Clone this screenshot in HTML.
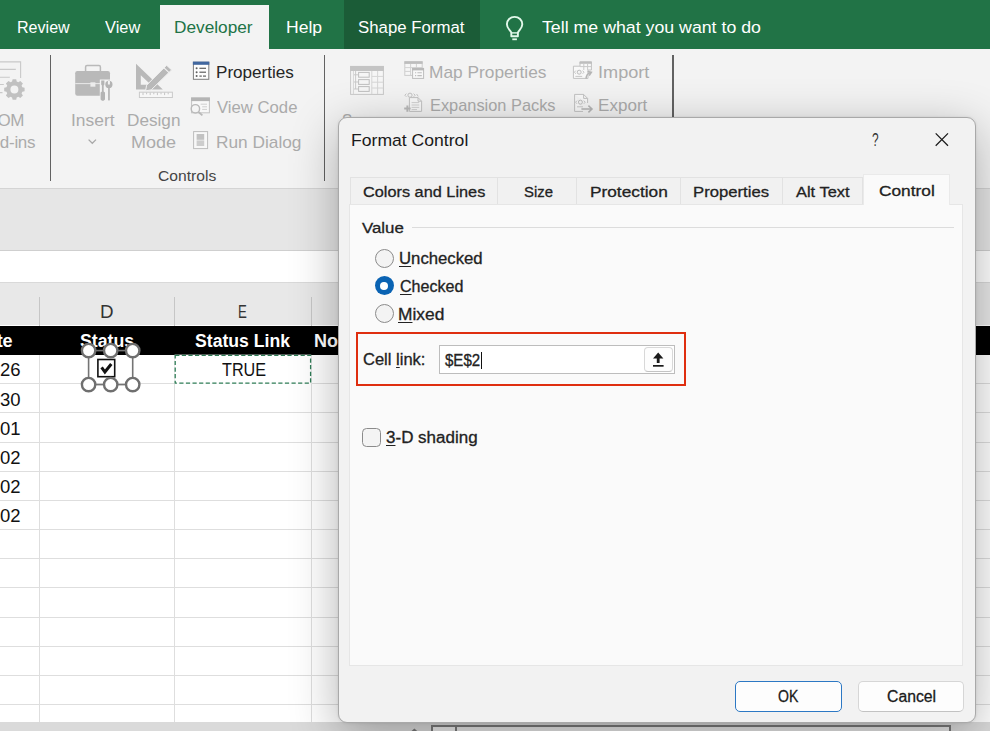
<!DOCTYPE html>
<html lang="en">
<head>
<meta charset="utf-8">
<title>Format Control</title>
<style>
html,body{margin:0;padding:0;}
body{width:990px;height:731px;position:relative;overflow:hidden;background:#fff;font-family:"Liberation Sans",sans-serif;}
.a{position:absolute;}
.t{position:absolute;white-space:pre;line-height:1;font-family:"Liberation Sans",sans-serif;}
.t u{text-decoration:underline;text-underline-offset:2px;text-decoration-thickness:1.3px;}
#bg{position:absolute;left:0;top:0;width:990px;height:731px;overflow:hidden;}
#dlg{position:absolute;left:338.3px;top:117px;width:638px;height:606.3px;box-sizing:border-box;background:#f2f2f2;border:1px solid #a9a9a9;border-radius:9px;box-shadow:0 12px 48px rgba(0,0,0,.30),0 0 3px rgba(0,0,0,.10);}
#dl{position:absolute;left:0;top:0;width:990px;height:731px;}
#dl .t{-webkit-text-stroke:0.3px currentColor;}
.tab{position:absolute;top:177px;height:28px;box-sizing:border-box;background:#f1f1f1;border:1px solid #e2e2e2;border-bottom:none;}
.vs{position:absolute;width:1px;background:#dedede;}
.hs{position:absolute;height:1px;background:#dedede;left:0;width:990px;}
</style>
</head>
<body>
<div id="bg">
  <!-- title / tab strip -->
  <div class="a" style="left:0;top:0;width:990px;height:48.5px;background:#217346;"></div>
  <div class="a" style="left:344px;top:0;width:136px;height:48.5px;background:#1b5c37;"></div>
  <div class="a" style="left:160px;top:5px;width:108.7px;height:44px;background:#f3f3f3;"></div>
  <!-- ribbon body -->
  <div class="a" style="left:0;top:48.5px;width:990px;height:140px;background:#f3f3f3;"></div>
  <div class="a" style="left:0;top:188px;width:990px;height:1px;background:#d4d4d4;"></div>
  <div class="a" style="left:0;top:189px;width:990px;height:61.5px;background:#e6e6e6;"></div>
  <div class="a" style="left:0;top:250px;width:990px;height:1px;background:#cfcfcf;"></div>
  <div class="a" style="left:0;top:251px;width:990px;height:31.3px;background:#ffffff;"></div>
  <div class="a" style="left:0;top:282.3px;width:990px;height:43.2px;background:#e8e8e8;"></div>
  <div class="a" style="left:0;top:281.8px;width:990px;height:1px;background:#d9d9d9;"></div>
  <div class="a" style="left:0;top:325.5px;width:990px;height:29.3px;background:#000;"></div>
  <!-- ribbon separators -->
  <div class="a" style="left:49.6px;top:55px;width:1.5px;height:126px;background:#626262;"></div>
  <div class="a" style="left:323.7px;top:55px;width:1.5px;height:126px;background:#626262;"></div>
  <div class="a" style="left:672.1px;top:55px;width:1.5px;height:126px;background:#626262;"></div>
  <!-- column header separators -->
  <div class="vs" style="left:39px;top:297px;height:28.5px;background:#c6c6c6;"></div>
  <div class="vs" style="left:174px;top:297px;height:28.5px;background:#c6c6c6;"></div>
  <div class="vs" style="left:310.5px;top:297px;height:28.5px;background:#c6c6c6;"></div>
  <!-- sheet gridlines -->
  <div class="vs" style="left:39px;top:354.8px;height:368px;"></div>
  <div class="vs" style="left:174px;top:354.8px;height:368px;"></div>
  <div class="vs" style="left:310.5px;top:354.8px;height:368px;"></div>
  <div class="hs" style="top:383.2px;"></div>
  <div class="hs" style="top:412.4px;"></div>
  <div class="hs" style="top:441.6px;"></div>
  <div class="hs" style="top:470.7px;"></div>
  <div class="hs" style="top:499.9px;"></div>
  <div class="hs" style="top:529.1px;"></div>
  <div class="hs" style="top:558.2px;"></div>
  <div class="hs" style="top:587.4px;"></div>
  <div class="hs" style="top:616.6px;"></div>
  <div class="hs" style="top:645.7px;"></div>
  <div class="hs" style="top:674.9px;"></div>
  <div class="hs" style="top:704.1px;"></div>
  <!-- bottom bar -->
  <div class="a" style="left:0;top:722px;width:990px;height:9px;background:#dadada;"></div>
  <div class="a" style="left:431px;top:724.6px;width:25.6px;height:10px;box-sizing:border-box;border:2px solid #7a7a7a;background:#ececec;"></div>
  <div class="a" style="left:454.6px;top:724.6px;width:496px;height:10px;box-sizing:border-box;border:2px solid #7a7a7a;background:#e6e6e6;"></div>
  <svg class="a" style="left:410px;top:727px;" width="10" height="4" viewBox="0 0 10 4"><path d="M1.6 4 L4.4 1.6 L7.2 4 Z" fill="#777"/></svg>

  <svg class="a" style="left:0;top:0;" width="990" height="731" viewBox="0 0 990 731">
    <!-- lightbulb -->
    <g fill="none" stroke="#e2f8ea" stroke-width="1.9" stroke-linejoin="round">
      <path d="M511.3 36.2 L511.3 32.6 C510.4 30.2 506.9 28.4 506.9 24.3 C506.9 20.1 510.3 16.9 514.6 16.9 C518.9 16.9 522.3 20.1 522.3 24.3 C522.3 28.4 518.8 30.2 517.9 32.6 L517.9 36.2 Z"/>
      <path d="M511.3 32.9 L517.9 32.9" stroke-width="1.4"/>
      <path d="M512.3 39.3 L516.9 39.3" stroke-width="1.8"/>
    </g>
    <!-- COM add-ins icon -->
    <g fill="none" stroke="#c9c9c9" stroke-width="1.1">
      <path d="M0 61.9 L20.6 61.9 L20.6 78"/>
      <path d="M0 69.4 L15.8 69.4 M0 77.2 L9.8 77.2 M0 84.5 L3.8 84.5 M0 92.6 L2.5 92.6"/>
    </g>
    <g fill="#c1c1c1">
      <path fill-rule="evenodd" d="M12.6 79.3 L16.2 79.3 L16.7 81.6 L18.3 82.3 L20.3 81 L22.9 83.6 L21.6 85.6 L22.3 87.2 L24.6 87.7 L24.6 91.3 L22.3 91.8 L21.6 93.4 L22.9 95.4 L20.3 98 L18.3 96.7 L16.7 97.4 L16.2 99.7 L12.6 99.7 L12.1 97.4 L10.5 96.7 L8.5 98 L5.9 95.4 L7.2 93.4 L6.5 91.8 L4.2 91.3 L4.2 87.7 L6.5 87.2 L7.2 85.6 L5.9 83.6 L8.5 81 L10.5 82.3 L12.1 81.6 Z M14.4 85.5 A4 4 0 1 0 14.4 93.5 A4 4 0 1 0 14.4 85.5 Z"/>
    </g>
    <!-- briefcase (Insert) -->
    <path d="M85.6 71 L85.6 67 Q85.6 65.6 87 65.6 L99 65.6 Q100.4 65.6 100.4 67 L100.4 71" fill="none" stroke="#b9b9b9" stroke-width="1.5"/>
    <rect x="75.2" y="71" width="34.8" height="24.8" rx="2.2" fill="#b9b9b9"/>
    <rect x="75.2" y="83" width="34.8" height="1.1" fill="#e4e4e4"/>
    <rect x="90.4" y="82.3" width="5" height="4.4" fill="#ececec"/>
    <rect x="99.8" y="79.5" width="12.8" height="22" fill="#f3f3f3"/>
    <path d="M101.2 80.6 L104.4 80.6 L104.4 84.6 L103.7 85.6 L103.7 91.5 L105 92.4 L105 99.6 L103.6 100.8 L102 100.8 L100.6 99.6 L100.6 92.4 L101.9 91.5 L101.9 85.6 L101.2 84.6 Z" fill="#b4b4b4"/>
    <path d="M108.9 80.8 A3.6 3.6 0 1 0 108.9 88 A3.6 3.6 0 1 0 108.9 80.8 Z M107.9 80.6 L107.9 84.4 L109.9 84.4 L109.9 80.6 Z" fill="#b4b4b4" fill-rule="evenodd"/>
    <rect x="108.1" y="87" width="1.7" height="13.4" fill="#b4b4b4"/>
    <!-- chevron under Insert -->
    <path d="M88.6 139.6 L92.3 143.3 L96 139.6" fill="none" stroke="#a8a8a8" stroke-width="1.3"/>
    <!-- design mode -->
    <path fill-rule="evenodd" d="M136 63.8 L162.8 89.4 L136 89.4 Z M140.8 75.2 L140.8 84.8 L150.9 84.8 Z" fill="#b9b9b9"/>
    <path d="M166.6 65.2 L171.6 69.9 L151.2 89.9 L145.6 90.8 L146.6 85.2 Z" fill="#b9b9b9" stroke="#f3f3f3" stroke-width="1"/>
    <path d="M163.8 67.6 L169 72.6" stroke="#f3f3f3" stroke-width="1.1"/>
    <rect x="139.4" y="92.2" width="33" height="5.3" fill="#f7f7f7" stroke="#cacaca" stroke-width="1"/>
    <path d="M143 92.5v2.6 M146.6 92.5v1.8 M150.2 92.5v2.6 M153.8 92.5v1.8 M157.4 92.5v2.6 M161 92.5v1.8 M164.6 92.5v2.6 M168.2 92.5v1.8" stroke="#c4c4c4" stroke-width="1"/>
    <!-- properties icon -->
    <rect x="193.4" y="62.3" width="15.4" height="17" fill="#fdfdfd" stroke="#7d7d7d" stroke-width="1"/>
    <rect x="192.9" y="61.6" width="16.4" height="3.2" fill="#41679f"/>
    <g fill="#5f5f5f">
      <circle cx="196.6" cy="68.3" r="1"/><circle cx="196.6" cy="72.2" r="1"/><circle cx="196.6" cy="76.1" r="1"/>
      <rect x="199.4" y="67.7" width="6.6" height="1.2"/><rect x="199.4" y="71.6" width="6.6" height="1.2"/><rect x="199.4" y="75.5" width="2.4" height="1.2"/><rect x="203" y="75.5" width="3" height="1.2"/>
    </g>
    <!-- view code icon -->
    <rect x="191.6" y="98" width="17.8" height="14.8" fill="#f8f8f8" stroke="#c4c4c4" stroke-width="1"/>
    <rect x="191.1" y="97.5" width="18.8" height="3.6" fill="#b4b4b4"/>
    <path d="M200.6 104.2h6.4 M202.2 106.8h4.8 M202.2 109.4h4.8" stroke="#cfcfcf" stroke-width="1"/>
    <circle cx="195.4" cy="108.8" r="4.2" fill="#f5f5f5" stroke="#b9b9b9" stroke-width="1.4"/>
    <path d="M198.5 112 L202.4 115.4" stroke="#b9b9b9" stroke-width="1.8"/>
    <!-- run dialog icon -->
    <rect x="193.6" y="131.6" width="14" height="17" fill="#f8f8f8" stroke="#bdbdbd" stroke-width="1"/>
    <rect x="196.6" y="134" width="7.6" height="5.8" fill="#c2c2c2"/>
    <rect x="196.6" y="140.4" width="7.6" height="5.6" fill="#cdcdcd"/>
    <!-- source icon -->
    <rect x="350.6" y="66.4" width="32.8" height="28" fill="#f6f6f6" stroke="#c9c9c9" stroke-width="1"/>
    <rect x="350.2" y="66" width="33.6" height="5" fill="#c4c4c4"/>
    <path d="M353.4 71 V94 M371.8 71 V94 M371.8 76.4 H383 M371.8 82.2 H383 M371.8 88 H383 M377.6 71 V94" stroke="#d6d6d6" stroke-width="1" fill="none"/>
    <path d="M354 74.8 H358.4 M354 82 H358.4 M354 89 H358.4 M355.6 71 V89" stroke="#c9c9c9" stroke-width="1" fill="none"/>
    <rect x="358.6" y="72.4" width="10.6" height="4.8" fill="#f6f6f6" stroke="#bfbfbf" stroke-width="1"/>
    <rect x="358.6" y="79.6" width="10.6" height="4.8" fill="#f6f6f6" stroke="#bfbfbf" stroke-width="1"/>
    <rect x="358.6" y="86.6" width="10.6" height="4.8" fill="#f6f6f6" stroke="#bfbfbf" stroke-width="1"/>
    <!-- map properties icon -->
    <rect x="404.8" y="61.8" width="17.4" height="13.6" fill="#f6f6f6" stroke="#cdcdcd" stroke-width="1"/>
    <rect x="404.4" y="61.3" width="18.2" height="2.6" fill="#bdbdbd"/>
    <path d="M410.6 64 V75 M416.4 64 V68 M405 67.6 H422 M405 71.4 H411" stroke="#d2d2d2" stroke-width="1"/>
    <rect x="412.6" y="68.4" width="11" height="10" fill="#f8f8f8" stroke="#bdbdbd" stroke-width="1"/>
    <rect x="412.2" y="68" width="11.8" height="2.4" fill="#b9b9b9"/>
    <path d="M415 72.8 h1.2 M417.4 72.8 h4.4 M415 75.6 h1.2 M417.4 75.6 h4.4" stroke="#bdbdbd" stroke-width="1.1"/>
    <!-- expansion packs icon -->
    <path d="M409.4 97.6 H418 L421.6 101.2 V111.4 H409.4 Z" fill="#f8f8f8" stroke="#c2c2c2" stroke-width="1"/>
    <path d="M418 97.6 V101.2 H421.6" fill="none" stroke="#c2c2c2" stroke-width="1"/>
    <path d="M411.6 102.6 h7.6 M411.6 105 h7.6 M411.6 107.4 h7.6 M411.6 109.6 h5.4" stroke="#d0d0d0" stroke-width="1"/>
    <circle cx="410" cy="95.2" r="2.1" fill="#f3f3f3" stroke="#c2c2c2" stroke-width="1"/>
    <path d="M406.4 93.6 l-1.6 1.6 l1.6 1.6 M413.6 93.6 l1.6 1.6 l-1.6 1.6 M416.6 94 l1.6 2.4" stroke="#c6c6c6" stroke-width="1" fill="none"/>
    <path d="M404.2 108.6 h6.4 M407.4 105.4 v6.4" stroke="#b9b9b9" stroke-width="2"/>
    <!-- import icon -->
    <path d="M573.4 66.2 H580 V62 H591.4 V70 H588 V78.4 H573.4 Z" fill="#f8f8f8" stroke="#c2c2c2" stroke-width="1"/>
    <rect x="579.6" y="61.4" width="12.2" height="2.4" fill="#bebebe"/>
    <path d="M580 66.6 H591 M583.8 64 V70 M587.6 64 V70" stroke="#c9c9c9" stroke-width="1"/>
    <circle cx="579.2" cy="72.2" r="2" fill="#f3f3f3" stroke="#bdbdbd" stroke-width="1"/>
    <path d="M575.8 70.6 l-1.4 1.6 l1.4 1.6 M582.6 70.6 l1.4 1.6 l-1.4 1.6 M575.4 76.4 h6.8" stroke="#c6c6c6" stroke-width="1" fill="none"/>
    <path d="M586 78.6 Q586.4 73.8 590.2 72.6 M587.6 71.4 L591.4 72.2 L589.2 75.6" stroke="#b4b4b4" stroke-width="1.5" fill="none"/>
    <!-- export icon -->
    <path d="M574.6 94.4 H583.6 L587.6 98.4 V103 M574.6 94.4 V111.4 H583" fill="#f8f8f8" stroke="#c2c2c2" stroke-width="1"/>
    <path d="M583.6 94.4 V98.4 H587.6" fill="none" stroke="#c2c2c2" stroke-width="1"/>
    <circle cx="580.4" cy="102.2" r="2" fill="#f3f3f3" stroke="#bdbdbd" stroke-width="1"/>
    <path d="M577 100.6 l-1.4 1.6 l1.4 1.6 M583.8 100.6 l1.4 1.6 l-1.4 1.6 M577 106.8 h6" stroke="#c6c6c6" stroke-width="1" fill="none"/>
    <path d="M581.4 109 H591.6 M588.4 105.6 L592 109 L588.4 112.4" stroke="#b4b4b4" stroke-width="1.5" fill="none"/>

  </svg>
  <!--ICONS-->

<span class="t" style="left:17.04px;top:20px;font-size:16.8px;color:#ffffff;transform:scaleX(0.9580);transform-origin:0 0;">Review</span>
<span class="t" style="left:104.70px;top:20px;font-size:16.8px;color:#ffffff;transform:scaleX(0.9770);transform-origin:0 0;">View</span>
<span class="t" style="left:173.97px;top:20px;font-size:16.8px;color:#217346;transform:scaleX(1.0276);transform-origin:0 0;">Developer</span>
<span class="t" style="left:285.95px;top:20px;font-size:16.8px;color:#ffffff;transform:scaleX(1.0458);transform-origin:0 0;">Help</span>
<span class="t" style="left:357.80px;top:20px;font-size:16.8px;color:#ffffff;transform:scaleX(1.0012);transform-origin:0 0;">Shape Format</span>
<span class="t" style="left:542.40px;top:20px;font-size:16.8px;color:#ffffff;transform:scaleX(1.0573);transform-origin:0 0;">Tell me what you want to do</span>
<span class="t" style="left:-2.52px;top:112px;font-size:17px;color:#ababab;letter-spacing:-0.5px;">OM</span>
<span class="t" style="left:-0.15px;top:134px;font-size:17px;color:#ababab;letter-spacing:-0.3px;">d-ins</span>
<span class="t" style="left:70.68px;top:112px;font-size:17px;color:#ababab;transform:scaleX(1.0241);transform-origin:0 0;">Insert</span>
<span class="t" style="left:126.99px;top:112px;font-size:17px;color:#ababab;transform:scaleX(1.0104);transform-origin:0 0;">Design</span>
<span class="t" style="left:130.94px;top:134px;font-size:17px;color:#ababab;transform:scaleX(1.0616);transform-origin:0 0;">Mode</span>
<span class="t" style="left:215.99px;top:64px;font-size:17px;color:#262626;transform:scaleX(1.0055);transform-origin:0 0;">Properties</span>
<span class="t" style="left:217.00px;top:99px;font-size:17px;color:#ababab;transform:scaleX(0.9822);transform-origin:0 0;">View Code</span>
<span class="t" style="left:215.98px;top:134px;font-size:17px;color:#ababab;transform:scaleX(1.0163);transform-origin:0 0;">Run Dialog</span>
<span class="t" style="left:158.00px;top:168px;font-size:15.5px;color:#444444;transform:scaleX(1.0092);transform-origin:0 0;">Controls</span>
<span class="t" style="left:342.00px;top:112px;font-size:17px;color:#ababab;transform:scaleX(0.8987);transform-origin:0 0;">Source</span>
<span class="t" style="left:429.48px;top:64px;font-size:17px;color:#ababab;transform:scaleX(1.0187);transform-origin:0 0;">Map Properties</span>
<span class="t" style="left:429.54px;top:97px;font-size:17px;color:#ababab;transform:scaleX(0.9627);transform-origin:0 0;">Expansion Packs</span>
<span class="t" style="left:598.33px;top:64px;font-size:17px;color:#ababab;transform:scaleX(1.0663);transform-origin:0 0;">Import</span>
<span class="t" style="left:598.40px;top:97px;font-size:17px;color:#ababab;transform:scaleX(1.0039);transform-origin:0 0;">Export</span>
<span class="t" style="left:100.26px;top:303px;font-size:18px;color:#333333;transform:scaleX(1.0417);transform-origin:0 0;">D</span>
<span class="t" style="left:237.96px;top:303px;font-size:18px;color:#333333;transform:scaleX(0.7364);transform-origin:0 0;">E</span>
<span class="t" style="left:-3.19px;top:332px;font-size:18px;color:#ffffff;letter-spacing:-0.3px;font-weight:700;">te</span>
<span class="t" style="left:80.00px;top:332px;font-size:18px;color:#ffffff;transform:scaleX(0.9855);transform-origin:0 0;font-weight:700;">Status</span>
<span class="t" style="left:195.00px;top:332px;font-size:18px;color:#ffffff;transform:scaleX(0.9796);transform-origin:0 0;font-weight:700;">Status Link</span>
<span class="t" style="left:314.00px;top:332px;font-size:18px;color:#ffffff;font-weight:700;">No</span>
<span class="t" style="left:221.50px;top:361px;font-size:18.2px;color:#111111;transform:scaleX(0.8911);transform-origin:0 0;">TRUE</span>
<span class="t" style="left:0.30px;top:361px;font-size:18.3px;color:#111111;transform:scaleX(1.0115);transform-origin:0 0;">26</span>
<span class="t" style="left:0.30px;top:391px;font-size:18.3px;color:#111111;transform:scaleX(1.0115);transform-origin:0 0;">30</span>
<span class="t" style="left:0.30px;top:420px;font-size:18.3px;color:#111111;transform:scaleX(1.0115);transform-origin:0 0;">01</span>
<span class="t" style="left:0.30px;top:449px;font-size:18.3px;color:#111111;transform:scaleX(1.0115);transform-origin:0 0;">02</span>
<span class="t" style="left:0.30px;top:478px;font-size:18.3px;color:#111111;transform:scaleX(1.0115);transform-origin:0 0;">02</span>
<span class="t" style="left:0.30px;top:507px;font-size:18.3px;color:#111111;transform:scaleX(1.0115);transform-origin:0 0;">02</span>
  <svg class="a" style="left:0;top:0;" width="990" height="731" viewBox="0 0 990 731">
    <!-- marching ants around E2 -->
    <rect x="175.2" y="355.3" width="135.4" height="27.9" fill="none" stroke="#ffffff" stroke-width="1.3"/>
    <rect x="175.2" y="355.3" width="135.4" height="27.9" fill="none" stroke="#2f7d57" stroke-width="1.3" stroke-dasharray="4.2 2.4"/>

    <!-- form-control checkbox with selection handles -->
    <rect x="88.6" y="350.6" width="44.1" height="34" fill="none" stroke="#747474" stroke-width="1.6"/>
    <rect x="97.9" y="359.5" width="16.8" height="17.2" fill="#ffffff" stroke="#111111" stroke-width="1.6"/>
    <path d="M101.6 367.4 L104.9 372 L111.3 364" fill="none" stroke="#111111" stroke-width="3"/>
    <g fill="#ffffff" stroke="#6f6f6f" stroke-width="2.4">
      <circle cx="88.6" cy="350.6" r="6.7"/><circle cx="110.7" cy="350.6" r="6.7"/><circle cx="132.7" cy="350.6" r="6.7"/>
      <circle cx="88.6" cy="384.6" r="6.7"/><circle cx="110.7" cy="384.6" r="6.7"/><circle cx="132.7" cy="384.6" r="6.7"/>
    </g>
  </svg>
</div>

<div id="dlg"></div>
<div id="dl">
    <!-- tabs -->
  <div class="tab" style="left:350px;width:148px;"></div>
  <div class="tab" style="left:497px;width:80px;"></div>
  <div class="tab" style="left:576px;width:105px;"></div>
  <div class="tab" style="left:680px;width:103px;"></div>
  <div class="tab" style="left:782px;width:81px;"></div>
  <!-- content panel -->
  <div class="a" style="left:349px;top:204px;width:614px;height:462px;box-sizing:border-box;background:#fafafa;border:1px solid #e6e6e6;"></div>
  <!-- active tab -->
  <div class="a" style="left:862.5px;top:173.8px;width:87px;height:31.7px;box-sizing:border-box;background:#fafafa;border:1px solid #eaeaea;border-bottom:none;"></div>
  <!-- close X -->
  <svg class="a" style="left:930px;top:128px;" width="24" height="24" viewBox="0 0 24 24"><path d="M5.7 5.4 L18 17.7 M18 5.4 L5.7 17.7" stroke="#1a1a1a" stroke-width="1.25" fill="none"/></svg>
  <!-- group line -->
  <div class="a" style="left:411.5px;top:227px;width:542px;height:1px;background:#dcdcdc;"></div>
  <!-- radios -->
  <div class="a" style="left:374.6px;top:248.6px;width:19px;height:19px;box-sizing:border-box;border-radius:50%;border:1.5px solid #8b8b8b;background:#f3f3f3;"></div>
  <div class="a" style="left:374.6px;top:276.2px;width:19px;height:19px;box-sizing:border-box;border-radius:50%;background:#0a63b3;"></div>
  <div class="a" style="left:380.2px;top:281.8px;width:7.8px;height:7.8px;border-radius:50%;background:#ffffff;"></div>
  <div class="a" style="left:374.6px;top:304px;width:19px;height:19px;box-sizing:border-box;border-radius:50%;border:1.5px solid #8b8b8b;background:#f3f3f3;"></div>
  <!-- red highlight -->
  <div class="a" style="left:355.5px;top:332.3px;width:330.3px;height:54.1px;box-sizing:border-box;border:2.8px solid #df2e0f;"></div>
  <!-- input -->
  <div class="a" style="left:438.5px;top:345px;width:236.3px;height:28.8px;box-sizing:border-box;background:#ffffff;border:1px solid #bdbdbd;"></div>
  <div class="a" style="left:644px;top:347px;width:29px;height:25px;box-sizing:border-box;background:#fdfdfd;border:1px solid #d8d8d8;border-bottom-color:#c4c4c4;border-radius:4px;"></div>
  <svg class="a" style="left:650px;top:351px;" width="16" height="18" viewBox="0 0 16 18"><path d="M8.2 1.6 L13.4 7.6 L9.6 7.6 L9.6 12 L6.8 12 L6.8 7.6 L3 7.6 Z" fill="#1a1a1a"/><rect x="3" y="14" width="10.6" height="1.7" fill="#1a1a1a"/></svg>
  <!-- caret -->
  <div class="a" style="left:480.6px;top:352px;width:1px;height:17px;background:#111;"></div>
  <!-- 3-D checkbox -->
  <div class="a" style="left:361.5px;top:428.3px;width:19px;height:18.6px;box-sizing:border-box;border:1.6px solid #8b8b8b;border-radius:4.5px;background:#f4f4f4;"></div>
  <!-- buttons -->
  <div class="a" style="left:734.8px;top:680.5px;width:107.4px;height:31.5px;box-sizing:border-box;background:#fdfdfd;border:1.6px solid #2c78c4;border-radius:5px;"></div>
  <div class="a" style="left:857.6px;top:681px;width:106.6px;height:30.6px;box-sizing:border-box;background:#fdfdfd;border:1px solid #d6d6d6;border-bottom-color:#c2c2c2;border-radius:5px;"></div>
  <!--DLGSHAPES-->
<span class="t" style="left:350.95px;top:133px;font-size:16.8px;color:#1a1a1a;transform:scaleX(1.0483);transform-origin:0 0;-webkit-text-stroke:0;">Format Control</span>
<span class="t" style="left:872.00px;top:131px;font-size:18px;color:#333333;transform:scaleX(.66);transform-origin:0 0;-webkit-text-stroke:0;">?</span>
<span class="t" style="left:363.40px;top:184px;font-size:15.4px;color:#222222;transform:scaleX(1.0587);transform-origin:0 0;">Colors and Lines</span>
<span class="t" style="left:523.60px;top:184px;font-size:15.4px;color:#222222;transform:scaleX(0.9666);transform-origin:0 0;">Size</span>
<span class="t" style="left:589.88px;top:184px;font-size:15.4px;color:#222222;transform:scaleX(1.1220);transform-origin:0 0;">Protection</span>
<span class="t" style="left:692.92px;top:184px;font-size:15.4px;color:#222222;transform:scaleX(1.0842);transform-origin:0 0;">Properties</span>
<span class="t" style="left:796.40px;top:184px;font-size:15.4px;color:#222222;transform:scaleX(1.0667);transform-origin:0 0;">Alt Text</span>
<span class="t" style="left:878.50px;top:183px;font-size:15.4px;color:#222222;transform:scaleX(1.1241);transform-origin:0 0;">Control</span>
<span class="t" style="left:361.80px;top:220px;font-size:15.4px;color:#222222;transform:scaleX(1.0940);transform-origin:0 0;">Value</span>
<span class="t" style="left:398.53px;top:251px;font-size:15.7px;color:#222222;transform:scaleX(1.0657);transform-origin:0 0;"><u>U</u>nchecked</span>
<span class="t" style="left:399.60px;top:279px;font-size:15.7px;color:#222222;transform:scaleX(1.0230);transform-origin:0 0;"><u>C</u>hecked</span>
<span class="t" style="left:398.49px;top:307px;font-size:15.7px;color:#222222;transform:scaleX(1.1066);transform-origin:0 0;"><u>M</u>ixed</span>
<span class="t" style="left:362.50px;top:351px;font-size:16.3px;color:#222222;transform:scaleX(1.0147);transform-origin:0 0;">Cell <u>l</u>ink:</span>
<span class="t" style="left:445.20px;top:353px;font-size:15.8px;color:#222222;transform:scaleX(0.9527);transform-origin:0 0;">$E$2</span>
<span class="t" style="left:386.30px;top:430px;font-size:15.6px;color:#222222;transform:scaleX(1.0898);transform-origin:0 0;"><u>3</u>-D shading</span>
<span class="t" style="left:777.90px;top:689px;font-size:16px;color:#1a1a1a;transform:scaleX(0.8786);transform-origin:0 0;">OK</span>
<span class="t" style="left:887.00px;top:689px;font-size:16px;color:#1a1a1a;transform:scaleX(0.9848);transform-origin:0 0;">Cancel</span>
</div>
</body>
</html>
